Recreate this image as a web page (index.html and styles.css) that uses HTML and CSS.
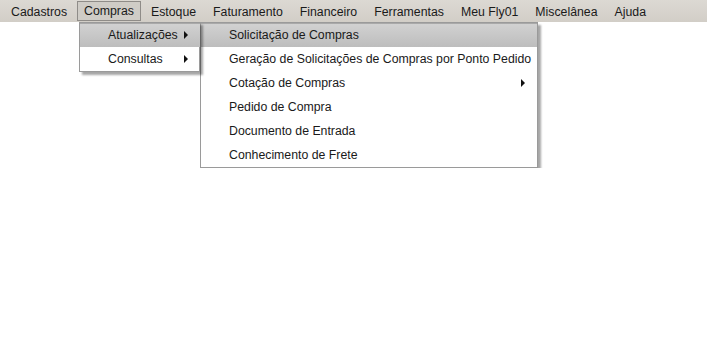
FILE: index.html
```html
<!DOCTYPE html>
<html lang="pt">
<head>
<meta charset="utf-8">
<title>Menu Compras</title>
<link rel="stylesheet" href="styles.css">
</head>
<body>
<div class="menubar">
  <span class="top">Cadastros</span>
  <span class="top open">Compras</span>
  <span class="top">Estoque</span>
  <span class="top">Faturamento</span>
  <span class="top">Financeiro</span>
  <span class="top">Ferramentas</span>
  <span class="top">Meu Fly01</span>
  <span class="top">Miscelânea</span>
  <span class="top">Ajuda</span>
</div>
<div class="menus">
  <div class="menu first">
    <div class="item hl"><span class="label">Atualizações</span><span class="arrow"></span></div>
    <div class="item"><span class="label">Consultas</span><span class="arrow"></span></div>
  </div>
  <div class="menu second">
    <div class="item hl"><span class="label">Solicitação de Compras</span></div>
    <div class="item"><span class="label">Geração de Solicitações de Compras por Ponto Pedido</span></div>
    <div class="item"><span class="label">Cotação de Compras</span><span class="arrow"></span></div>
    <div class="item"><span class="label">Pedido de Compra</span></div>
    <div class="item"><span class="label">Documento de Entrada</span></div>
    <div class="item"><span class="label">Conhecimento de Frete</span></div>
  </div>
</div>
</body>
</html>
```
FILE: styles.css
```css
html, body {
  margin: 0;
  padding: 0;
  background: #ffffff;
}
body {
  font-family: "Liberation Sans", Arial, sans-serif;
  font-size: 12.3px;
  color: #1a1a1a;
}
.menubar {
  height: 22px;
  box-sizing: border-box;
  background: linear-gradient(#dcd9d3, #d2cec7);
  display: flex;
  align-items: center;
  gap: 3px;
  padding-left: 4px;
}
.top {
  height: 20px;
  line-height: 20px;
  box-sizing: border-box;
  padding: 0 6px;
  border: 1px solid transparent;
}
.top.open {
  border-color: #8f8c88;
  background: #cfccc6;
  line-height: 18px;
}
.menus {
  display: flex;
  align-items: flex-start;
  padding-left: 79px;
}
.menu {
  background: #fff;
  border: 1px solid #9a9a9a;
  box-shadow: 3px 3px 2px rgba(0, 0, 0, 0.35);
  box-sizing: border-box;
}
.menu.first {
  width: 121px;
  position: relative;
  z-index: 1;
}
.menu.second {
  width: 338px;
}
.item {
  height: 24px;
  display: flex;
  align-items: center;
  position: relative;
}
.first .item { padding-left: 28px; }
.second .item { padding-left: 28px; }
.item.hl {
  background: linear-gradient(#d2d2d2, #bdbdbd);
  box-shadow: inset 0 1px 0 #a9a9a9;
}
.first .item.hl { margin: 0 -1px 0 0; }
.arrow {
  position: absolute;
  width: 0;
  height: 0;
  border-top: 4px solid transparent;
  border-bottom: 4px solid transparent;
  border-left: 4px solid #111;
  top: 8px;
}
.first .arrow { left: 104px; }
.second .arrow { left: 320px; }
```
